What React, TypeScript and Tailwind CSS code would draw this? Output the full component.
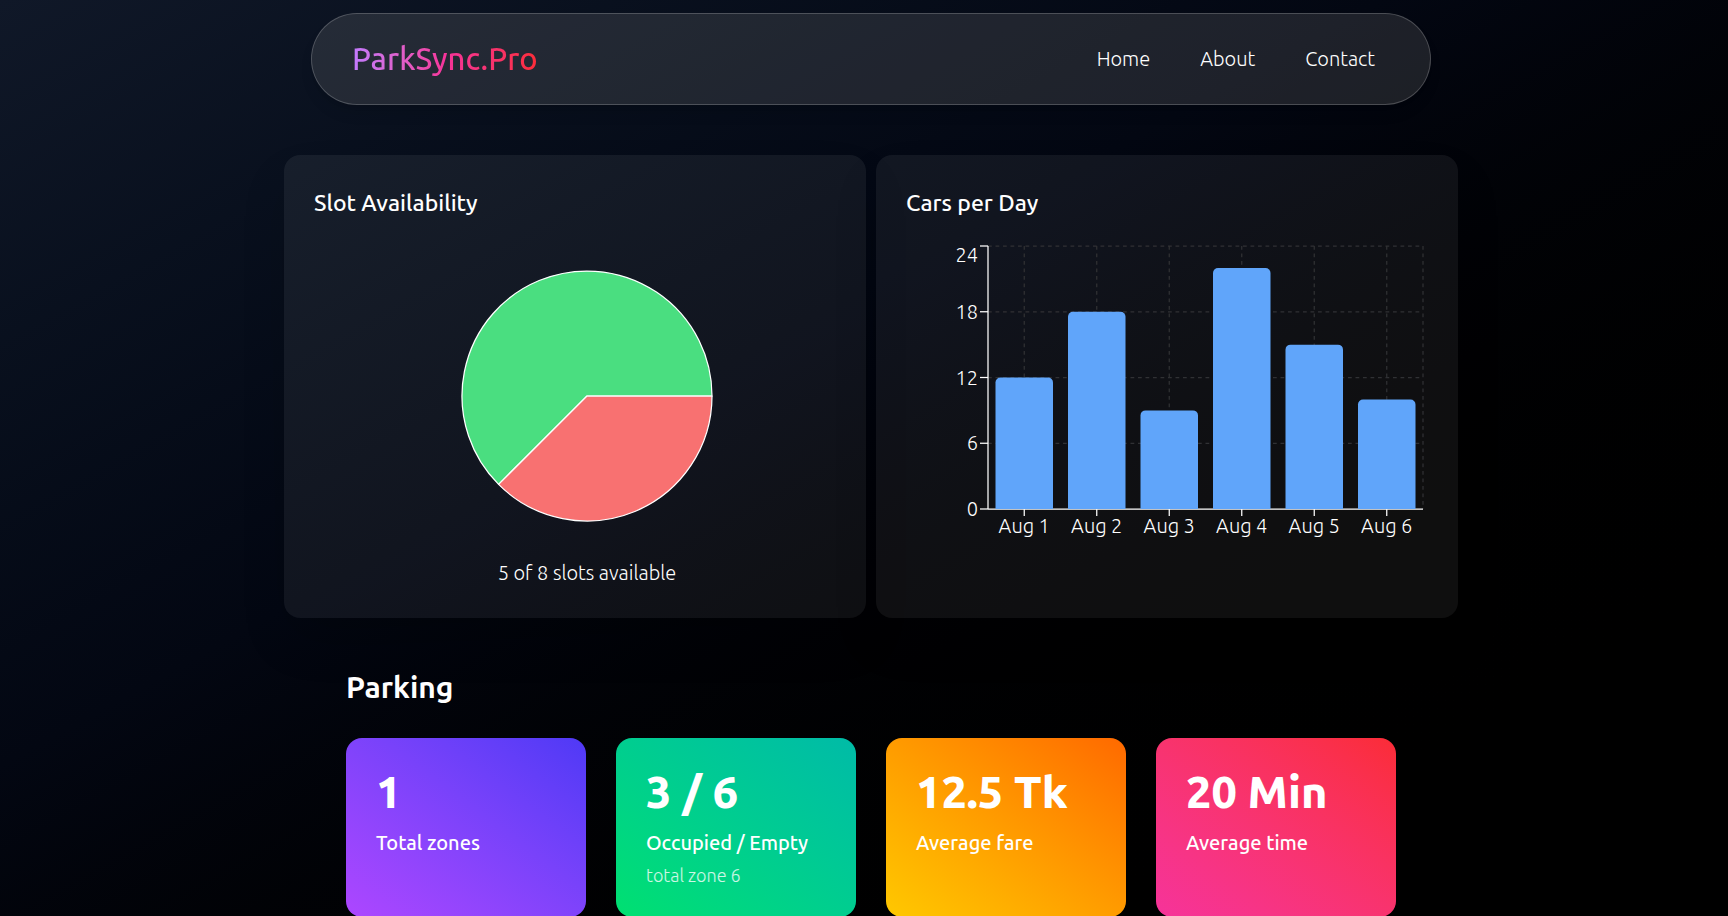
const axisTicks = [0, 6, 12, 18, 24];

const days = [
  { label: "Aug 1", cars: 12 },
  { label: "Aug 2", cars: 18 },
  { label: "Aug 3", cars: 9 },
  { label: "Aug 4", cars: 22 },
  { label: "Aug 5", cars: 15 },
  { label: "Aug 6", cars: 10 },
];

const stats = [
  { value: "1", label: "Total zones", tone: "from-[#ad46ff] to-[#4f39f6]" },
  { value: "3 / 6", label: "Occupied / Empty", note: "total zone 6", tone: "from-[#00e070] to-[#00bba7]" },
  { value: "12.5 Tk", label: "Average fare", tone: "from-[#ffc800] to-[#ff6900]" },
  { value: "20 Min", label: "Average time", tone: "from-[#f6339a] to-[#fb2c36]" },
];

const links = ["Home", "About", "Contact"];

function Header() {
  return (
    <header className="mx-auto flex h-[92px] w-full max-w-[1120px] items-center justify-between rounded-full border border-white/20 bg-[#8a8a8a]/20 px-10 shadow-lg">
      <a href="#" className="bg-linear-to-r from-[#c27aff] via-[#f6339a] to-[#fb2c36] bg-clip-text text-[31px] leading-10 font-medium text-transparent">
        ParkSync.Pro
      </a>
      <nav className="flex gap-5">
        {links.map((link) => (
          <a key={link} href="#" className="px-[15px] text-[20px] leading-8">
            {link}
          </a>
        ))}
      </nav>
    </header>
  );
}

function SlotPie() {
  return (
    <svg viewBox="0 0 252 252" className="size-[252px]" role="img" aria-label="Slot availability">
      <g stroke="#fff" strokeWidth="1.25" strokeLinejoin="round">
        <path d="M126 126 L251 126 A125 125 0 1 0 37.6 214.4 Z" fill="#4ade80" />
        <path d="M126 126 L37.6 214.4 A125 125 0 0 0 251 126 Z" fill="#f87171" />
      </g>
    </svg>
  );
}

function CarsChart() {
  const left = 82;
  const right = 517;
  const top = 6;
  const bottom = 269;
  const band = (right - left) / days.length;
  const yOf = (v: number) => bottom - (v / 24) * (bottom - top);
  const barWidth = 57.5;
  return (
    <svg viewBox="0 0 522 308" className="w-full" role="img" aria-label="Cars per day">
      <g stroke="#303134" strokeWidth="1.25" strokeDasharray="3.75 3.75">
        {axisTicks.slice(1).map((t) => (
          <line key={t} x1={left} x2={right} y1={yOf(t)} y2={yOf(t)} />
        ))}
        {days.map((d, i) => (
          <line key={d.label} x1={left + band * (i + 0.5)} x2={left + band * (i + 0.5)} y1={top} y2={bottom} />
        ))}
        <line x1={right} x2={right} y1={top} y2={bottom} />
      </g>
      <g stroke="#fff" strokeWidth="1.25">
        <line x1={left} x2={left} y1={top} y2={bottom} />
        <line x1={left} x2={right} y1={bottom} y2={bottom} />
        {axisTicks.map((t) => (
          <line key={t} x1={left - 8} x2={left} y1={yOf(t)} y2={yOf(t)} />
        ))}
        {days.map((d, i) => (
          <line key={d.label} x1={left + band * (i + 0.5)} x2={left + band * (i + 0.5)} y1={bottom} y2={bottom + 7} />
        ))}
      </g>
      <g fill="#60a5fa">
        {days.map((d, i) => {
          const x = left + band * i + (band - barWidth) / 2;
          const y = yOf(d.cars);
          return (
            <path
              key={d.label}
              d={`M${x} ${bottom} V${y + 5} a5 5 0 0 1 5 -5 H${x + barWidth - 5} a5 5 0 0 1 5 5 V${bottom} Z`}
            />
          );
        })}
      </g>
      <g fill="#fff" fontSize="20">
        {axisTicks.map((t) => (
          <text key={t} x={left - 10} y={(t === 24 ? 15 : yOf(t)) + 7} textAnchor="end">
            {t}
          </text>
        ))}
        {days.map((d, i) => (
          <text key={d.label} x={left + band * (i + 0.5)} y={bottom + 24} textAnchor="middle">
            {d.label}
          </text>
        ))}
      </g>
    </svg>
  );
}

export default function App() {
  return (
    <div className="min-h-screen overflow-hidden bg-linear-to-br from-[#101828] via-[#030712] via-40% to-black to-85% pt-[13px] pb-10 pl-[14px] font-['Ubuntu','Noto_Sans',sans-serif] font-light text-white">
      <Header />
      <main>
        <section className="mx-auto mt-[50px] grid max-w-[1174px] grid-cols-2 gap-[10px]">
          <article className="h-[463px] rounded-2xl bg-white/6 p-[30px] shadow-2xl">
            <h2 className="text-[23px] leading-9 font-medium">Slot Availability</h2>
            <div className="mt-[49px] flex flex-col items-center pl-6">
              <SlotPie />
              <p className="mt-[35px] text-[20px] leading-8">5 of 8 slots available</p>
            </div>
          </article>
          <article className="h-[463px] rounded-2xl bg-white/6 p-[30px] shadow-2xl">
            <h2 className="mb-[19px] text-[23px] leading-9 font-medium">Cars per Day</h2>
            <CarsChart />
          </article>
        </section>
        <section className="mx-auto mt-[49px] max-w-[1050px]">
          <h2 className="text-[30px] leading-10 font-semibold">Parking</h2>
          <div className="mt-[31px] grid grid-cols-4 gap-[30px]">
            {stats.map((s) => (
              <article key={s.label} className={`h-[179px] rounded-2xl bg-linear-to-tr p-[30px] ${s.tone}`}>
                <p className="text-[45px] leading-[48px] font-extrabold">{s.value}</p>
                <p className="mt-3 text-[20px] leading-[30px] font-medium">{s.label}</p>
                {s.note && <p className="mt-[5px] text-[18px] leading-6 text-white/80">{s.note}</p>}
              </article>
            ))}
          </div>
        </section>
      </main>
    </div>
  );
}
